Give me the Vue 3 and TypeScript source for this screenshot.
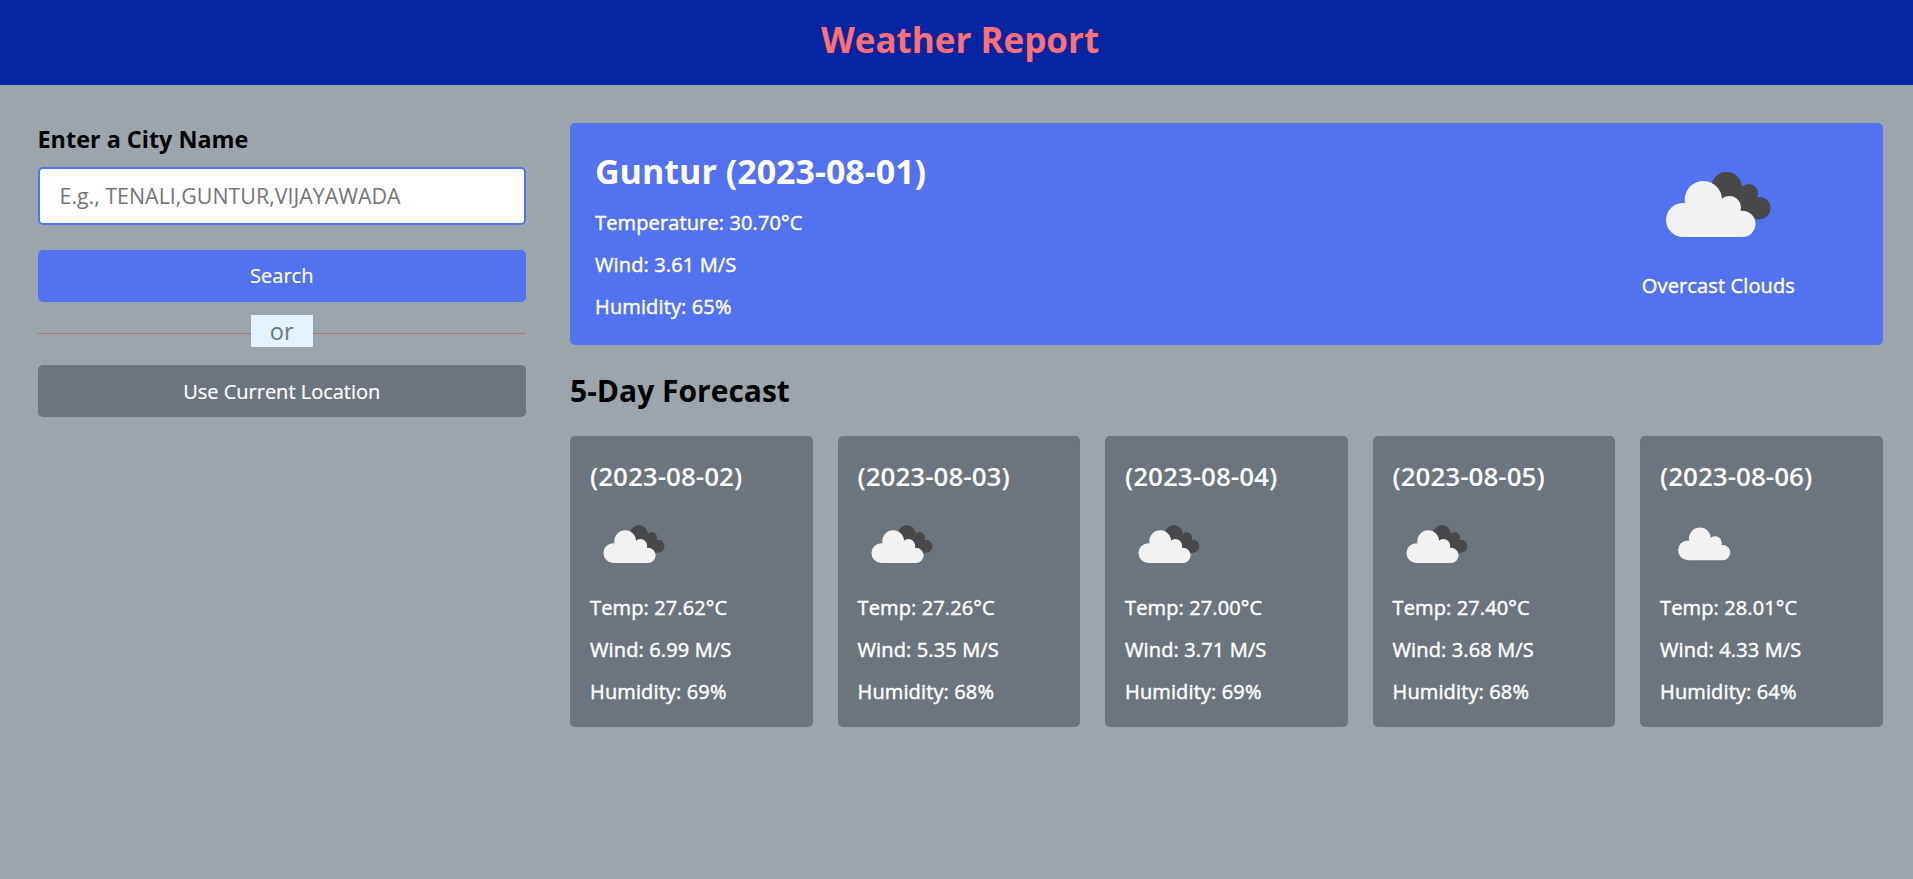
<script setup lang="ts">
import { ref } from 'vue'

interface Forecast {
  date: string
  temp: string
  wind: string
  humidity: number
  overcast: boolean
}

const city = ref('')

const forecast: Forecast[] = [
  { date: '2023-08-02', temp: '27.62', wind: '6.99', humidity: 69, overcast: true },
  { date: '2023-08-03', temp: '27.26', wind: '5.35', humidity: 68, overcast: true },
  { date: '2023-08-04', temp: '27.00', wind: '3.71', humidity: 69, overcast: true },
  { date: '2023-08-05', temp: '27.40', wind: '3.68', humidity: 68, overcast: true },
  { date: '2023-08-06', temp: '28.01', wind: '4.33', humidity: 64, overcast: false },
]
</script>

<template>
  <div class="page">
    <svg class="defs" width="0" height="0" aria-hidden="true">
      <symbol id="cloud" viewBox="0 0 450 450">
        <circle cx="120" cy="273" r="51" />
        <circle cx="181" cy="212" r="56" />
        <circle cx="259" cy="236" r="35" />
        <circle cx="298" cy="284.5" r="39.5" />
        <path d="M120 324V273L181 212L259 236L298 284V324Z" />
      </symbol>
      <symbol id="cloud-back" viewBox="0 0 450 450">
        <circle cx="251" cy="175" r="46" />
        <circle cx="317" cy="193" r="28" />
        <circle cx="349" cy="237.5" r="33.5" />
        <path d="M251 175L317 193L349 237V271H260Z" />
      </symbol>
    </svg>

    <h1>Weather Report</h1>
    <div class="container">
      <div class="weather-input">
        <h3>Enter a City Name</h3>
        <input v-model="city" type="text" placeholder="E.g., TENALI,GUNTUR,VIJAYAWADA" />
        <button class="search">Search</button>
        <div class="separator"><span>or</span></div>
        <button class="location">Use Current Location</button>
      </div>

      <div class="weather-data">
        <div class="current">
          <div>
            <h2>Guntur (2023-08-01)</h2>
            <h6>Temperature: 30.70°C</h6>
            <h6>Wind: 3.61 M/S</h6>
            <h6>Humidity: 65%</h6>
          </div>
          <div class="icon">
            <svg class="big" viewBox="0 0 450 450">
              <use href="#cloud-back" fill="#48484a" />
              <use href="#cloud" fill="#f2f2f2" />
            </svg>
            <h6>Overcast Clouds</h6>
          </div>
        </div>

        <h2 class="forecast-title">5-Day Forecast</h2>
        <ul class="cards">
          <li v-for="day in forecast" :key="day.date" class="card">
            <h3>({{ day.date }})</h3>
            <svg class="small" viewBox="0 0 450 450">
              <template v-if="day.overcast">
                <use href="#cloud-back" fill="#48484a" />
                <use href="#cloud" fill="#f2f2f2" />
              </template>
              <use v-else href="#cloud" fill="#f2f2f2" transform="translate(24 -14)" />
            </svg>
            <h6>Temp: {{ day.temp }}°C</h6>
            <h6>Wind: {{ day.wind }} M/S</h6>
            <h6>Humidity: {{ day.humidity }}%</h6>
          </li>
        </ul>
      </div>
    </div>
  </div>
</template>

<style>
html,
body {
  background: #9da5ac;
  overflow: hidden;
}
</style>

<style scoped>
* {
  margin: 0;
  padding: 0;
  box-sizing: border-box;
  font-family: 'Open Sans', sans-serif;
}
.page {
  width: 1920px;
  min-height: 879px;
  font-size: 20px;
  background: #9da5ac;
  color: #000;
}
.defs {
  position: absolute;
}
h1 {
  height: 85px;
  padding-top: 16px;
  background: #0526a3;
  color: #ff6f74;
  font-size: 35px;
  font-weight: 700;
  text-align: center;
}
.container {
  display: flex;
  gap: 44px;
  padding: 37.5px;
}
.weather-input {
  width: 488.5px;
  flex: none;
}
.weather-input h3 {
  font-size: 23.4px;
  font-weight: 700;
}
input {
  display: block;
  width: 100%;
  height: 57.5px;
  margin: 12.5px 0 25px;
  padding: 0 20px;
  border: 2px solid #5372f0;
  border-radius: 5px;
  outline: none;
  background: #fff;
  font-size: 21.4px;
}
input::placeholder {
  color: #757575;
}
button {
  display: block;
  width: 100%;
  padding: 12.5px 0;
  border: 0;
  border-radius: 5px;
  color: #fff;
  font-size: 20px;
  -webkit-text-stroke: 0.2px #fff;
}
.search {
  background: #5372f0;
}
.location {
  background: #6c757d;
}
.separator {
  display: flex;
  align-items: center;
  justify-content: center;
  height: 1px;
  margin: 31.25px 0;
  background: #b76e74;
}
.separator span {
  margin-top: -5px;
  padding: 0 19px;
  background: #e3f2fd;
  color: #6c757d;
  font-size: 23.6px;
}
.weather-data {
  flex: 1;
}
.current {
  display: flex;
  justify-content: space-between;
  padding: 25px 87.5px 25px 25px;
  border-radius: 5px;
  background: #5372f0;
  color: #fff;
}
.current h2 {
  font-size: 34px;
  font-weight: 700;
}
h6 {
  margin-top: 15px;
  font-size: 20px;
  font-weight: 500;
  letter-spacing: 0.13px;
  -webkit-text-stroke: 0.45px #fff;
}
.icon {
  text-align: center;
}
.icon h6 {
  margin-top: -12.5px;
}
.big {
  width: 150px;
  height: 150px;
  margin-top: -18.75px;
}
.forecast-title {
  margin: 25px 0;
  font-size: 30px;
  font-weight: 700;
}
.cards {
  display: flex;
  gap: 25px;
  list-style: none;
}
.card {
  flex: 1;
  padding: 22.5px 20px;
  border-radius: 5px;
  background: #6c757d;
  color: #fff;
}
.card h3 {
  font-size: 26px;
  font-weight: 600;
}
.small {
  width: 87.5px;
  height: 87.5px;
  margin: 6.25px 0 -15px;
}
</style>
